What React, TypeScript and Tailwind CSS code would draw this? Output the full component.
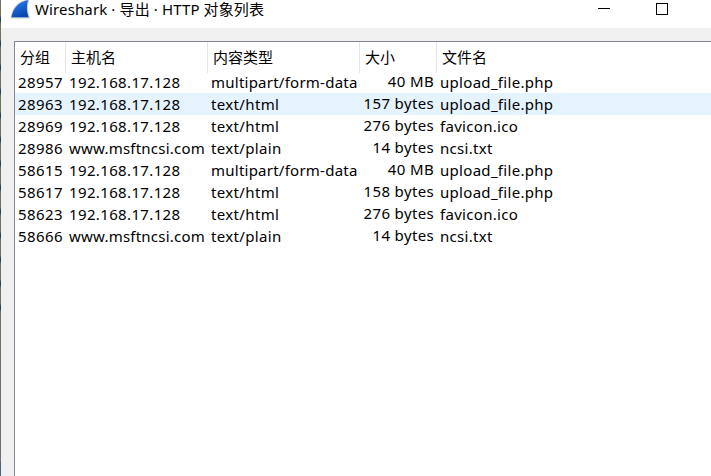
import React from "react";

type Entry = { packet: string; host: string; type: string; size: string; file: string };

const HOST = "192.168.17.128";
const NCSI = "www.msftncsi.com";
const FORM = "multipart/form-data";

const entries: Entry[] = [
  { packet: "28957", host: HOST, type: FORM, size: "40 MB", file: "upload_file.php" },
  { packet: "28963", host: HOST, type: "text/html", size: "157 bytes", file: "upload_file.php" },
  { packet: "28969", host: HOST, type: "text/html", size: "276 bytes", file: "favicon.ico" },
  { packet: "28986", host: NCSI, type: "text/plain", size: "14 bytes", file: "ncsi.txt" },
  { packet: "58615", host: HOST, type: FORM, size: "40 MB", file: "upload_file.php" },
  { packet: "58617", host: HOST, type: "text/html", size: "158 bytes", file: "upload_file.php" },
  { packet: "58623", host: HOST, type: "text/html", size: "276 bytes", file: "favicon.ico" },
  { packet: "58666", host: NCSI, type: "text/plain", size: "14 bytes", file: "ncsi.txt" },
];

const columns = "grid grid-cols-[51px_142px_152px_77px_1fr]";

function SharkFin() {
  return (
    <svg className="h-[20px] w-[20px] shrink-0" viewBox="0 0 20 20">
      <defs>
        <linearGradient id="fin" x1="0" y1="0" x2="0.5" y2="1">
          <stop offset="0" stopColor="#3a86e8" />
          <stop offset="0.5" stopColor="#1a66d6" />
          <stop offset="1" stopColor="#0a45ac" />
        </linearGradient>
      </defs>
      <path d="M0.500 18.400C2 7.500 8 0.500 19.300 -0.500C17.300 5 17.600 12 20 18.400Z" fill="#c3cad6" />
      <path d="M1.500 17.200C3 8.500 8.800 1.500 18 0.300C16.300 5.500 16.500 12 18.600 17.200Z" fill="url(#fin)" />
    </svg>
  );
}

export default function App() {
  return (
    <div className="flex h-[476px] w-[711px] overflow-hidden bg-[#f0f0f0] font-['Noto_Sans','Noto_Sans_CJK_SC',sans-serif] text-[15px] text-black">
      <div className="flex w-px shrink-0 flex-col bg-[#707070]">
        <div className="h-[315px] bg-[repeating-linear-gradient(to_bottom,#6f765f_0px,#6f765f_15px,#2c5868_17px,#1f3b5e_20px,#3b5560_22px,#6f765f_24px)]" />
        <div className="h-[40px] bg-[#6f765f]" />
        <div className="mt-auto h-[14px] bg-[#4a6085]" />
      </div>
      <div className="flex min-w-0 flex-1 flex-col">
        <div className="flex h-7 shrink-0 bg-white pl-[9px]">
          <SharkFin />
          <span className="ml-[5px] h-5 whitespace-pre leading-[18px] tracking-[0.12px]">Wireshark · 导出 · HTTP 对象列表</span>
          <svg className="ml-auto mr-[42px] h-[20px] w-[71px]" viewBox="0 0 71 20" shapeRendering="crispEdges">
            <path d="M0 8.500H12M58.500 3.500H69.500V14.500H58.500Z" fill="none" stroke="#000" />
          </svg>
        </div>
        <div className="ml-[13px] mt-[13px] flex-1 border-l border-t border-[#828790] bg-white">
          <div className={`${columns} h-[29px] leading-[31px]`}>
            {["分组", "主机名", "内容类型", "大小"].map((label) => (
              <div key={label} className="border-r border-[#e5e5e5] pl-[5px]">{label}</div>
            ))}
            <div className="pl-[5px]">文件名</div>
          </div>
          {entries.map((e, i) => (
            <div key={e.packet} className={`${columns} h-[22px] whitespace-nowrap leading-[22px] ${i === 1 ? "bg-[#e5f3ff]" : ""}`}>
              <span className="pl-[3px] tracking-[0.42px]">{e.packet}</span>
              <span className={`pl-[3px] ${e.host === NCSI ? "tracking-[0.22px]" : "tracking-[0.36px]"}`}>{e.host}</span>
              <span className={`pl-[3px] ${e.type === FORM ? "tracking-[0.24px]" : "tracking-[0.35px]"}`}>{e.type}</span>
              <span className="pr-[3px] text-right leading-[20px] tracking-[0.35px]">{e.size}</span>
              <span className="pl-[3px] tracking-[0.3px]">{e.file}</span>
            </div>
          ))}
        </div>
      </div>
    </div>
  );
}
